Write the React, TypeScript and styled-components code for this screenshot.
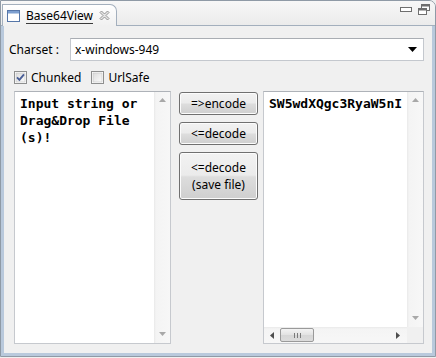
import React from "react";
import styled, { createGlobalStyle } from "styled-components";

const GlobalStyle = createGlobalStyle`
  body {
    margin: 0;
    background: #f0f0f0;
    font-family: "Noto Sans", "Liberation Sans", sans-serif;
    font-size: 12px;
    color: #000;
  }
`;

const View = styled.div`
  width: 436px;
  height: 357px;
  box-sizing: border-box;
  display: flex;
  flex-direction: column;
  border: 1px solid #8f9aa6;
  border-top-right-radius: 7px;
  overflow: hidden;
  background: #f0f0f0;
`;

const Header = styled.div`
  height: 24px;
  flex: none;
  display: flex;
  align-items: flex-end;
  background: linear-gradient(#f7f7f7, #ebebeb);
  border-bottom: 1px solid #a3afbd;
`;

const Tab = styled.div`
  height: 22px;
  width: 115px;
  margin-left: 1px;
  margin-bottom: -1px;
  box-sizing: border-box;
  display: flex;
  align-items: center;
  gap: 6px;
  padding: 0 0 0 4px;
  background: linear-gradient(#ffffff, #f0f0f0);
  border: 1px solid #a3afbd;
  border-bottom: none;
  border-top-right-radius: 7px;
  position: relative;
  z-index: 1;
`;

const TabTitle = styled.span`
  font-size: 12px;
  line-height: 14px;
  border-bottom: 1px solid #3a3a3a;
  margin-top: 1px;
`;

const WindowButtons = styled.div`
  margin-left: auto;
  display: flex;
  align-items: center;
  gap: 6px;
  padding: 0 5px 10px 0;
`;

const Body = styled.div`
  flex: 1;
  display: flex;
  flex-direction: column;
  border: 3px solid #b9c9dc;
  border-top: none;
  padding: 12px 8px 9px 0;
  min-height: 0;
`;

const CharsetRow = styled.div`
  display: flex;
  align-items: center;
  height: 23px;
`;

const Label = styled.span`
  width: 61px;
  padding-left: 5px;
  flex: none;
`;

const Combo = styled.div`
  flex: 1;
  height: 23px;
  box-sizing: border-box;
  display: flex;
  align-items: center;
  padding: 0 6px 0 4px;
  background: #fff;
  border: 1px solid #c4c8ce;
  border-top-color: #a9adb3;
`;

const ComboText = styled.span`
  flex: 1;
`;

const CheckRow = styled.div`
  display: flex;
  align-items: center;
  gap: 10px;
  margin: 9px 0 0 10px;
  height: 15px;
`;

const CheckLabel = styled.label`
  display: flex;
  align-items: center;
  gap: 4px;
`;

const MainRow = styled.div`
  flex: 1;
  display: flex;
  margin: 6px 0 0 10px;
  min-height: 0;
`;

const Pane = styled.div<{ $width?: number }>`
  ${({ $width }) => ($width ? `width: ${$width}px; flex: none;` : "flex: 1;")}
  box-sizing: border-box;
  border: 1px solid #c6c9ce;
  border-top-color: #aeb2b8;
  background: #fff;
  display: grid;
  grid-template-columns: minmax(0, 1fr) 16px;
  grid-template-rows: minmax(0, 1fr) auto;
  min-width: 0;
  overflow: hidden;
`;

const PaneText = styled.div<{ $nowrap?: boolean }>`
  font-family: "DejaVu Sans Mono", "Liberation Mono", monospace;
  font-weight: bold;
  font-size: 13px;
  line-height: 17px;
  padding: 3px 0 0 5px;
  overflow: hidden;
  min-width: 0;
  white-space: ${({ $nowrap }) => ($nowrap ? "pre" : "normal")};
`;

const VScroll = styled.div`
  display: flex;
  flex-direction: column;
  justify-content: space-between;
  align-items: center;
  background: linear-gradient(90deg, #e9e9e9 0, #f4f4f4 2px, #f7f7f7 100%);
  padding: 6px 0 7px;
`;

const HScroll = styled.div`
  height: 16px;
  display: flex;
  align-items: center;
  background: linear-gradient(#e9e9e9 0, #f4f4f4 2px, #f7f7f7 100%);
  padding: 0 7px 0 6px;
`;

const Spacer = styled.span`
  flex: 1;
`;

const Thumb = styled.div`
  width: 34px;
  height: 14px;
  margin-left: 6px;
  box-sizing: border-box;
  border: 1px solid #9a9a9a;
  border-radius: 2px;
  background: linear-gradient(#f3f3f3, #e2e2e2 50%, #d6d6d6 50%, #dcdcdc);
  display: flex;
  align-items: center;
  justify-content: center;
  gap: 2px;
`;

const Grip = styled.span`
  width: 1px;
  height: 5px;
  background: #7a7a7a;
`;

const Corner = styled.div`
  background: #f0f0f0;
`;

const Buttons = styled.div`
  width: 79px;
  flex: none;
  margin: 1px 5px 0 8px;
  display: flex;
  flex-direction: column;
  gap: 7px;
`;

const Button = styled.button<{ $tall?: boolean }>`
  height: ${({ $tall }) => ($tall ? 48 : 23)}px;
  box-sizing: border-box;
  padding: 0;
  font-family: "Noto Sans", "Liberation Sans", sans-serif;
  font-size: 12px;
  line-height: 17px;
  color: #000;
  border: 1px solid #707070;
  border-radius: 3px;
  background: linear-gradient(#f2f2f2 0%, #ebebeb 48%, #dddddd 52%, #cfcfcf 100%);
  box-shadow: inset 0 0 0 1px #fcfcfc;
`;

const ArrowUp = () => (
  <svg width="7" height="4" viewBox="0 0 7 4">
    <path d="M3.5 0 L7 4 L0 4 Z" fill="#a8a8a8" />
  </svg>
);

const ArrowDown = () => (
  <svg width="7" height="4" viewBox="0 0 7 4">
    <path d="M0 0 L7 0 L3.5 4 Z" fill="#a8a8a8" />
  </svg>
);

const ArrowLeft = () => (
  <svg width="4" height="7" viewBox="0 0 4 7">
    <path d="M4 0 L4 7 L0 3.5 Z" fill="#4d4d4d" />
  </svg>
);

const ArrowRight = () => (
  <svg width="4" height="7" viewBox="0 0 4 7">
    <path d="M0 0 L4 3.5 L0 7 Z" fill="#4d4d4d" />
  </svg>
);

const CheckBox = ({ checked }: { checked?: boolean }) => (
  <svg width="13" height="13" viewBox="0 0 13 13">
    <defs>
      <linearGradient id={checked ? "cbg1" : "cbg0"} x1="0" y1="0" x2="1" y2="1">
        <stop offset="0" stopColor="#dcdcdc" />
        <stop offset="1" stopColor="#fbfbfb" />
      </linearGradient>
    </defs>
    <rect x="0.5" y="0.5" width="12" height="12" fill="#fff" stroke="#8e8f8f" />
    <rect x="2" y="2" width="9" height="9" fill={`url(#${checked ? "cbg1" : "cbg0"})`} stroke="#c2c2c2" strokeWidth="0.6" />
    {checked && (
      <path d="M3 6.3 L5.4 8.8 L10 3.3" fill="none" stroke="#4a5f97" strokeWidth="1.9" />
    )}
  </svg>
);

const ViewIcon = () => (
  <svg width="13" height="12" viewBox="0 0 13 12">
    <rect x="0.5" y="0.5" width="12" height="11" fill="#fff" stroke="#5676a8" />
    <rect x="1" y="1" width="11" height="2.5" fill="#7d9fd0" />
  </svg>
);

const CloseIcon = () => (
  <svg width="11" height="11" viewBox="0 0 11 11">
    <path
      d="M1 2.5 L2.5 1 L5.5 4 L8.5 1 L10 2.5 L7 5.5 L10 8.5 L8.5 10 L5.5 7 L2.5 10 L1 8.5 L4 5.5 Z"
      fill="#e4e4e4"
      stroke="#8a8a8a"
      strokeWidth="0.9"
    />
  </svg>
);

const MinimizeIcon = () => (
  <svg width="12" height="6" viewBox="0 0 12 6">
    <rect x="0.5" y="0.5" width="11" height="4" fill="#fff" stroke="#6f6f6f" />
  </svg>
);

const RestoreIcon = () => (
  <svg width="12" height="11" viewBox="0 0 12 11">
    <rect x="3.5" y="0.5" width="8" height="6" fill="#fff" stroke="#6f6f6f" />
    <rect x="3.5" y="0.5" width="8" height="2" fill="#6f6f6f" />
    <rect x="0.5" y="4.5" width="8" height="6" fill="#fff" stroke="#6f6f6f" />
    <rect x="0.5" y="4.5" width="8" height="2" fill="#6f6f6f" />
  </svg>
);

const ComboArrow = () => (
  <svg width="9" height="5" viewBox="0 0 9 5">
    <path d="M0 0 L9 0 L4.5 5 Z" fill="#000" />
  </svg>
);

export default function App() {
  return (
    <>
      <GlobalStyle />
      <View>
        <Header>
          <Tab>
            <ViewIcon />
            <TabTitle>Base64View</TabTitle>
            <CloseIcon />
          </Tab>
          <WindowButtons>
            <MinimizeIcon />
            <RestoreIcon />
          </WindowButtons>
        </Header>
        <Body>
          <CharsetRow>
            <Label>Charset :</Label>
            <Combo>
              <ComboText>x-windows-949</ComboText>
              <ComboArrow />
            </Combo>
          </CharsetRow>
          <CheckRow>
            <CheckLabel>
              <CheckBox checked />
              Chunked
            </CheckLabel>
            <CheckLabel>
              <CheckBox />
              UrlSafe
            </CheckLabel>
          </CheckRow>
          <MainRow>
            <Pane $width={157}>
              <PaneText>
                Input string or
                <br />
                Drag&amp;Drop File
                <br />
                (s)!
              </PaneText>
              <VScroll>
                <ArrowUp />
                <ArrowDown />
              </VScroll>
            </Pane>
            <Buttons>
              <Button>=&gt;encode</Button>
              <Button>&lt;=decode</Button>
              <Button $tall>
                &lt;=decode
                <br />
                (save file)
              </Button>
            </Buttons>
            <Pane>
              <PaneText $nowrap>SW5wdXQgc3RyaW5nI</PaneText>
              <VScroll>
                <ArrowUp />
                <ArrowDown />
              </VScroll>
              <HScroll>
                <ArrowLeft />
                <Thumb>
                  <Grip />
                  <Grip />
                  <Grip />
                </Thumb>
                <Spacer />
                <ArrowRight />
              </HScroll>
              <Corner />
            </Pane>
          </MainRow>
        </Body>
      </View>
    </>
  );
}
